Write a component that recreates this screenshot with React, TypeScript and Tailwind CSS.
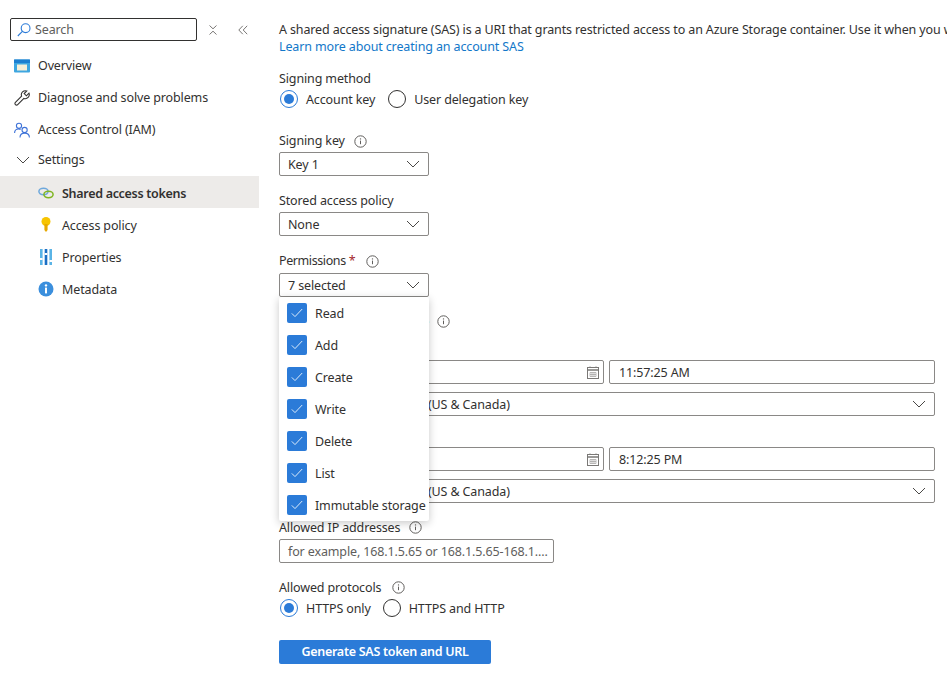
import type { ReactNode } from "react";

const navTop = "flex items-center h-8 pl-[14px] gap-2 pt-px";

// nudges text down to sit where the original font's baseline does
function Txt({ children, className = "" }: { children: ReactNode; className?: string }) {
  return <span className={`pt-[2px] ${className}`}>{children}</span>;
}

function Chevron({ className = "" }: { className?: string }) {
  return (
    <svg width="14" height="8" viewBox="0 0 14 8" fill="none" stroke="#4a4846" strokeWidth="1" className={className}>
      <path d="M1 1l6 6 6-6" />
    </svg>
  );
}

function Info({ className = "" }: { className?: string }) {
  return (
    <svg width="13" height="13" viewBox="0 0 13 13" fill="none" className={className}>
      <circle cx="6.5" cy="6.5" r="5.7" stroke="#605e5c" strokeWidth="1" />
      <path d="M6.5 5.6v3.6" stroke="#605e5c" strokeWidth="1" />
      <circle cx="6.5" cy="3.9" r=".7" fill="#605e5c" />
    </svg>
  );
}

function Calendar() {
  return (
    <svg width="12" height="13" viewBox="0 0 12 13" fill="none" stroke="#7a7876" strokeWidth="1">
      <rect x=".5" y="1.5" width="11" height="11" />
      <path d="M.5 4h11" strokeWidth="1.5" />
      <path d="M3 .5v1.5M9 .5v1.5" />
      <path d="M3 6.5h6v4H3zM5 6.5v4M7 6.5v4M3 8.5h6" strokeWidth=".7" stroke="#a19f9d" />
    </svg>
  );
}

function Radio({ on, label }: { on?: boolean; label: string }) {
  return (
    <div className="flex items-center gap-2">
      <span
        className={
          on
            ? "flex w-[18px] h-[18px] items-center justify-center rounded-full border border-[#2b7bd8]"
            : "flex w-[18px] h-[18px] items-center justify-center rounded-full border border-[#323130]"
        }
      >
        {on && <span className="w-[10px] h-[10px] rounded-full bg-[#2b7bd8]" />}
      </span>
      <Txt>{label}</Txt>
    </div>
  );
}

function Label({ children, className = "" }: { children: ReactNode; className?: string }) {
  return <div className={`flex items-center h-[18px] ${className}`}>{children}</div>;
}

function Select({ value, className = "" }: { value: string; className?: string }) {
  return (
    <div className={`flex items-center justify-between h-6 pl-2 pr-2 border border-[#8a8886] rounded-[2px] bg-white ${className}`}>
      <Txt className="whitespace-nowrap">{value}</Txt>
      <Chevron />
    </div>
  );
}

function DateTime({ time }: { time: string }) {
  return (
    <div className="flex gap-[5px]">
      <div className="flex items-center justify-end w-[325px] h-6 pr-1 border border-[#8a8886] rounded-[2px]">
        <Calendar />
      </div>
      <div className="flex items-center w-[326px] h-6 pl-[9px] border border-[#8a8886] rounded-[2px]">
        <Txt>{time}</Txt>
      </div>
    </div>
  );
}

const permissions = ["Read", "Add", "Create", "Write", "Delete", "List", "Immutable storage"];

export default function App() {
  return (
    <div className="flex w-[947px] h-[687px] overflow-hidden bg-white text-[#323130] text-[12.5px] font-['Noto_Sans',sans-serif] tracking-[-0.13px]">
      {/* sidebar */}
      <aside className="w-[259px] shrink-0">
        <div className="flex items-center h-[49px] pt-[10px] pl-[10px]">
          <div className="flex items-center w-[187px] h-[23px] pl-[6px] gap-1 border border-[#323130] rounded-[2px]">
            <svg width="14" height="14" viewBox="0 0 14 14" fill="none" stroke="#2b7bd8" strokeWidth="1.1">
              <circle cx="8.6" cy="5.2" r="4.4" />
              <path d="M5.4 8.4L.8 13" />
            </svg>
            <Txt className="text-[#605e5c]">Search</Txt>
          </div>
          <svg width="10" height="10" viewBox="0 0 10 10" fill="none" stroke="#797775" strokeWidth="1" className="ml-[11px]">
            <path d="M1.5.5L5 3.8 8.5.5M1.5 9.5L5 6.2l3.5 3.3" />
          </svg>
          <svg width="10" height="10" viewBox="0 0 10 10" fill="none" stroke="#797775" strokeWidth="1" className="ml-5">
            <path d="M4.8.8L.8 5l4 4.2M9.2.8L5.2 5l4 4.2" />
          </svg>
        </div>
        <div className={navTop}>
          <svg width="16" height="14" viewBox="0 0 16 14">
            <rect width="16" height="13" y=".5" rx="1" fill="#3ea6e0" />
            <rect width="16" height="3.5" y=".5" fill="#1c7fd0" />
            <rect x="3" y="5.5" width="10" height="6" fill="#f6efd8" />
          </svg>
          <Txt>Overview</Txt>
        </div>
        <div className={navTop}>
          <svg width="16" height="16" viewBox="0 0 16 16" fill="none" stroke="#323130" strokeWidth="1.1">
            <path d="M15 3.2l-2.6 2.6-2.2-2.2L12.8 1A4 4 0 0 0 7.6 6.1L1.4 12.3a1.6 1.6 0 0 0 2.3 2.3l6.2-6.2A4 4 0 0 0 15 3.2z" />
          </svg>
          <Txt>Diagnose and solve problems</Txt>
        </div>
        <div className={navTop}>
          <svg width="16" height="16" viewBox="0 0 16 16" fill="none" stroke="#3f73d8" strokeWidth="1.1">
            <circle cx="5" cy="3.8" r="2.6" />
            <path d="M.6 11c0-2.4 1.6-4 4-4 .8 0 1.4.2 2 .5" />
            <circle cx="10.6" cy="8" r="2.6" />
            <path d="M6 15.5c0-2.6 1.8-4.4 4.6-4.4s4.8 1.8 4.8 4.4" />
          </svg>
          <Txt>Access Control (IAM)</Txt>
        </div>
        <div className="flex items-center h-[31px] pl-4 gap-2 pb-[2px]">
          <Chevron />
          <Txt>Settings</Txt>
        </div>
        <div className="flex items-center h-8 pl-[38px] gap-2 bg-[#edebe9] font-semibold tracking-[-0.3px] pt-[2px]">
          <svg width="16" height="12" viewBox="0 0 16 12" fill="none" strokeWidth="1.5">
            <ellipse cx="5.5" cy="4.5" rx="4.6" ry="3.2" stroke="#6ea8dc" />
            <ellipse cx="10.5" cy="7.5" rx="4.6" ry="3.2" stroke="#7fb522" />
          </svg>
          <Txt>Shared access tokens</Txt>
        </div>
        <div className="flex items-center h-8 pl-[41px] gap-[11px] pt-[2px]">
          <svg width="10" height="16" viewBox="0 0 10 16">
            <circle cx="5" cy="4.5" r="4.5" fill="#f7c400" />
            <path d="M3.4 7h3.2v6L5 15l-1.6-2z" fill="#e6a800" />
          </svg>
          <Txt>Access policy</Txt>
        </div>
        <div className="flex items-center h-8 pl-[40px] gap-[10px] pt-[2px]">
          <svg width="12" height="16" viewBox="0 0 12 16">
            <rect x="0" width="2.6" height="16" fill="#5ab4e6" />
            <rect x="4.7" width="2.6" height="16" fill="#1c6fc4" />
            <rect x="9.4" width="2.6" height="16" fill="#5ab4e6" />
            <rect x="0" y="9" width="2.6" height="2" fill="#fff" />
            <rect x="4.7" y="4" width="2.6" height="2" fill="#fff" />
            <rect x="9.4" y="11" width="2.6" height="2" fill="#fff" />
          </svg>
          <Txt>Properties</Txt>
        </div>
        <div className="flex items-center h-8 pl-[38px] gap-2 pt-[2px]">
          <svg width="16" height="16" viewBox="0 0 16 16">
            <circle cx="8" cy="8" r="7.5" fill="#3b8fdd" />
            <rect x="7" y="6.6" width="2" height="5.8" fill="#fff" />
            <circle cx="8" cy="4.4" r="1.2" fill="#fff" />
          </svg>
          <Txt>Metadata</Txt>
        </div>
      </aside>

      {/* main form */}
      <main className="relative flex-1 pl-5 pt-[21px] whitespace-nowrap">
        <p className="leading-[17px]">
          A shared access signature (SAS) is a URI that grants restricted access to an Azure Storage container. Use it when you want to grant access to storage resources
        </p>
        <a className="block leading-[17px] text-[#1277c9]">Learn more about creating an account SAS</a>

        <Label className="mt-[14px]">
          <Txt>Signing method</Txt>
        </Label>
        <div className="flex items-center gap-[13px] h-6 pl-px">
          <Radio on label="Account key" />
          <Radio label="User delegation key" />
        </div>

        <Label className="mt-[21px]">
          <span>Signing key</span> <Info className="ml-[9px]" />
        </Label>
        <Select value="Key 1" className="w-[150px] mt-[2px]" />

        <Label className="mt-4">
          <span>Stored access policy</span>
        </Label>
        <Select value="None" className="w-[150px] mt-[2px]" />

        <Label className="mt-4">
          <span className="tracking-[-0.4px]">Permissions</span> <span className="ml-[3px] text-[#a4262c]">*</span>{" "}
          <Info className="ml-[10px]" />
        </Label>
        <Select value="7 selected" className="w-[150px] mt-[3px]" />

        <Label className="mt-[15px] w-[171px] justify-between">
          <Txt>Start and expiry date/time</Txt> <Info />
        </Label>
        <Label className="mt-[9px]">
          <Txt>Start</Txt>
        </Label>
        <div className="mt-[3px]">
          <DateTime time="11:57:25 AM" />
        </div>
        <Select value="(UTC-08:00) Pacific Time (US & Canada)" className="w-[656px] mt-2" />

        <Label className="mt-[10px]">
          <Txt>Expiry</Txt>
        </Label>
        <div className="mt-[3px]">
          <DateTime time="8:12:25 PM" />
        </div>
        <Select value="(UTC-08:00) Pacific Time (US & Canada)" className="w-[656px] mt-2" />

        <Label className="mt-[15px]">
          <Txt>Allowed IP addresses</Txt> <Info className="ml-[9px]" />
        </Label>
        <div className="flex items-center w-[275px] h-6 mt-[3px] pl-2 border border-[#8a8886] rounded-[2px] text-[#605e5c]">
          <Txt>for example, 168.1.5.65 or 168.1.5.65-168.1....</Txt>
        </div>

        <Label className="mt-[15px]">
          <Txt>Allowed protocols</Txt> <Info className="ml-[11px]" />
        </Label>
        <div className="flex items-center gap-3 h-6 pl-px">
          <Radio on label="HTTPS only" />
          <Radio label="HTTPS and HTTP" />
        </div>

        <button className="flex items-center justify-center w-[212px] h-6 mt-5 rounded-[2px] bg-[#2b7bd8] text-white font-semibold tracking-[-0.28px]">
          Generate SAS token and URL
        </button>

        {/* permissions dropdown */}
        <div className="absolute left-5 top-[297px] w-[150px] h-[224px] bg-white rounded-[2px] shadow-[0_2px_8px_rgba(0,0,0,0.22)]">
          {permissions.map((p) => (
            <div key={p} className="flex items-center h-8 pl-2 gap-2">
              <span className="flex items-center justify-center w-5 h-5 shrink-0 rounded-[2px] bg-[#2b7bd8]">
                <svg width="12" height="10" viewBox="0 0 12 10" fill="none" stroke="#dcebfa" strokeWidth="1">
                  <path d="M.8 5.4L4 8.6 11.2 1" />
                </svg>
              </span>
              <Txt>{p}</Txt>
            </div>
          ))}
        </div>
      </main>
    </div>
  );
}
